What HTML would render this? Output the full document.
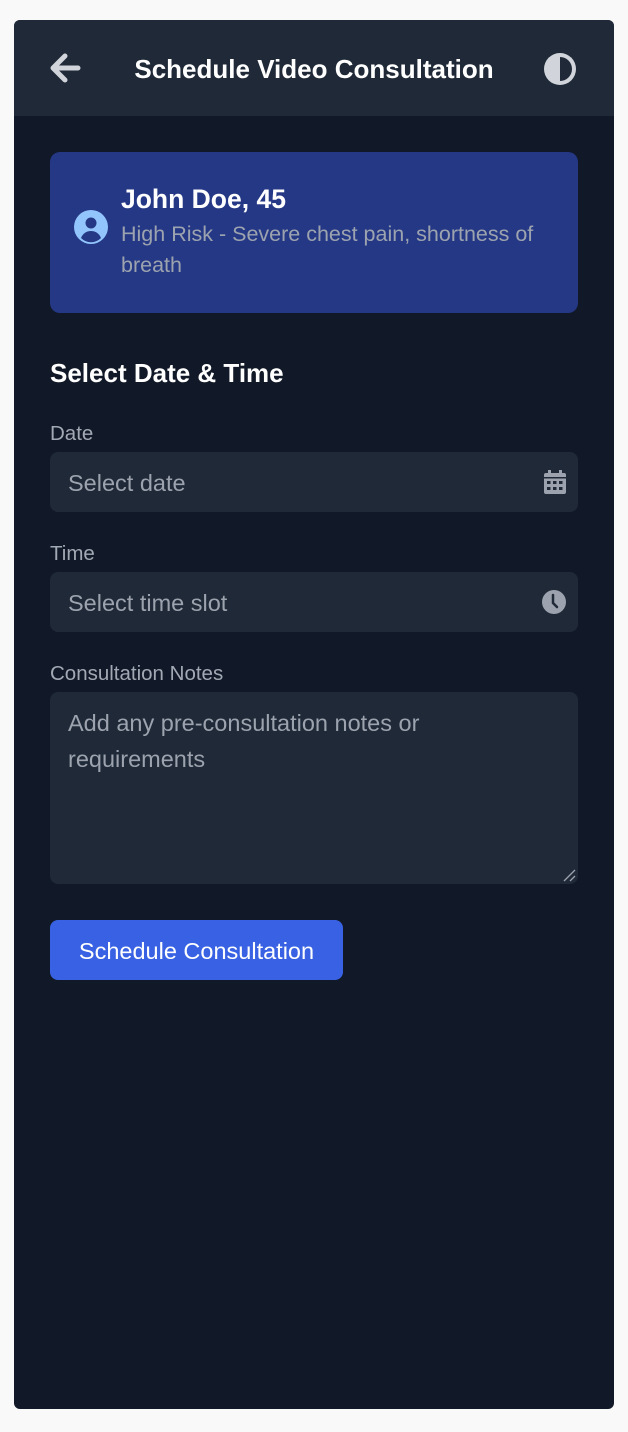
<!DOCTYPE html>
<html><head><style>
*{margin:0;padding:0;box-sizing:border-box}
body{width:628px;height:1432px;background:#f9f9f9;font-family:"Liberation Sans",Arial,sans-serif;position:relative;overflow:hidden}
.c{position:absolute;left:14px;top:20px;width:600px;height:1389px;background:#111827;border-radius:6px;overflow:hidden}
.h{position:absolute;left:0;top:0;width:600px;height:96px;background:#1f2937}
.a{position:absolute}
.t{position:absolute;left:0;width:600px;top:34px;text-align:center;color:#fff;font-weight:bold;font-size:26px}
.card{position:absolute;left:36px;top:132px;width:528px;height:161px;background:#253885;border-radius:10px}
.lbl{position:absolute;left:36px;color:#a3a9b4;font-size:20.5px}
.in{position:absolute;left:36px;width:528px;height:60px;background:#1f2937;border-radius:8px;color:#9ca3af;font-size:23.5px;padding:18px 18px}
.btn{position:absolute;left:36px;top:900px;width:293px;height:60px;background:#3862e3;border-radius:8px;color:#fff;font-size:23.5px;text-align:center;line-height:62px}
</style></head><body>
<div class="c">
<div class="h">
<svg class="a" style="left:34px;top:31px" width="36" height="34" viewBox="0 0 36 34"><path d="M30 17H6M17 5L5 17l12 12" fill="none" stroke="#d1d5db" stroke-width="5" stroke-linecap="round" stroke-linejoin="round"/></svg>
<div class="t">Schedule Video Consultation</div>
<svg class="a" style="left:528px;top:31px" width="36" height="36" viewBox="0 0 36 36"><circle cx="18" cy="18" r="16" fill="#d1d5db"/><path d="M18 6a12 12 0 0 1 0 24z" fill="#1f2937"/></svg>
</div>
<div class="card">
<svg class="a" style="left:24px;top:58px" width="34" height="34" viewBox="0 0 34 34"><circle cx="17" cy="17" r="17" fill="#93c5fd"/><circle cx="17" cy="13" r="5.5" fill="#253885"/><path d="M7 28c2-5 6-7 10-7s8 2 10 7a14 14 0 0 1-20 0z" fill="#253885"/></svg>
<div class="a" style="left:71px;top:32px;color:#fff;font-weight:bold;font-size:26.5px">John Doe, 45</div>
<div class="a" style="left:71px;top:67px;width:450px;color:#9ca3af;font-size:21.5px;line-height:31px">High Risk - Severe chest pain, shortness of breath</div>
</div>
<div class="a" style="left:36px;top:338px;color:#fff;font-weight:bold;font-size:26px">Select Date &amp; Time</div>
<div class="lbl" style="top:402px">Date</div>
<div class="in" style="top:432px">Select date
<svg class="a" style="left:494px;top:18px" width="22" height="24" viewBox="0 0 22 24"><rect x="0" y="3" width="22" height="21" rx="2" fill="#9ca3af"/><rect x="4" y="0" width="3" height="5" fill="#9ca3af"/><rect x="15" y="0" width="3" height="5" fill="#9ca3af"/><rect x="0" y="7" width="22" height="1.5" fill="#1f2937"/><g fill="#1f2937"><rect x="3" y="11" width="3.5" height="3"/><rect x="9" y="11" width="3.5" height="3"/><rect x="15" y="11" width="3.5" height="3"/><rect x="3" y="17" width="3.5" height="3"/><rect x="9" y="17" width="3.5" height="3"/><rect x="15" y="17" width="3.5" height="3"/></g></svg>
</div>
<div class="lbl" style="top:522px">Time</div>
<div class="in" style="top:552px">Select time slot
<svg class="a" style="left:492px;top:18px" width="24" height="24" viewBox="0 0 24 24"><circle cx="12" cy="12" r="12" fill="#9ca3af"/><path d="M11 5v8l4 4" fill="none" stroke="#1f2937" stroke-width="2.5" stroke-linecap="round"/></svg>
</div>
<div class="lbl" style="top:642px">Consultation Notes</div>
<div class="in" style="top:672px;height:192px;line-height:36px;padding-top:13px">Add any pre-consultation notes or requirements
<svg class="a" style="left:512px;top:176px" width="14" height="14" viewBox="0 0 14 14"><path d="M2 13L13 2M8 13l5-5" stroke="#9ca3af" stroke-width="1.3"/></svg>
</div>
<div class="btn">Schedule Consultation</div>
</div>
</body></html>
